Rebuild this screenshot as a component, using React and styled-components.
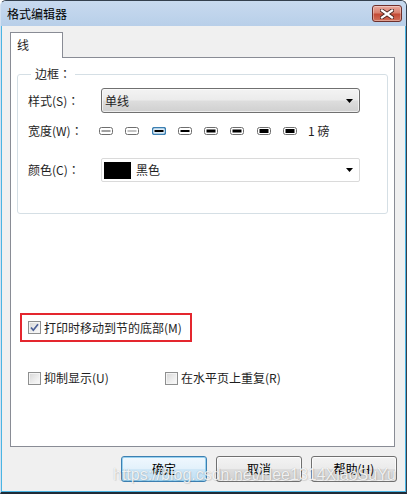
import React from "react"
import styled, { createGlobalStyle } from "styled-components"

const GlobalStyle = createGlobalStyle`
  html, body {
    margin: 0;
    padding: 0;
    background: #ffffff;
  }
  body {
    font-family: "Noto Sans CJK SC", "Noto Sans", sans-serif;
    font-size: 12px;
    color: #1e1e1e;
  }
  * {
    box-sizing: border-box;
  }
`

const Window = styled.div`
  position: relative;
  width: 407px;
  height: 494px;
  display: flex;
  flex-direction: column;
  background: #bcd2ea;
  border-top: 1px solid #34404e;
  border-right: 1px solid #34404e;
  border-bottom: 2px solid #1f2b37;
  border-left: 1px solid #d2e1f1;
  border-top-left-radius: 6px;
  border-top-right-radius: 6px;
  overflow: hidden;
`

const TitleBar = styled.div`
  height: 25px;
  flex-shrink: 0;
  display: flex;
  align-items: center;
  justify-content: space-between;
  padding: 0 4px 0 6px;
  background: linear-gradient(180deg, #c8daef 0%, #b8cfe9 100%);
`

const Title = styled.span`
  font-size: 12px;
  line-height: 16px;
  color: #000;
`

const CloseButton = styled.div`
  width: 30px;
  height: 17px;
  display: flex;
  align-items: center;
  justify-content: center;
  border: 1px solid #6e2f2b;
  border-radius: 3px;
  background: linear-gradient(180deg, #e8a99e 0%, #d9816f 45%, #c44a35 55%, #d1705a 100%);
  box-shadow: inset 0 0 0 1px rgba(255, 255, 255, 0.35);
`

const Body = styled.div`
  flex: 1;
  display: flex;
  flex-direction: column;
  padding: 6px 10px 9px 8px;
  background: #f0f0f0;
  border: 1px solid #4ab5e3;
  border-top: none;
`

const TabStrip = styled.div`
  display: flex;
  height: 25px;
  flex-shrink: 0;
`

const Tab = styled.div`
  position: relative;
  z-index: 1;
  width: 53px;
  height: 26px;
  padding: 4px 0 0 6px;
  line-height: 16px;
  background: #ffffff;
  border: 1px solid #898c95;
  border-bottom: none;
`

const Panel = styled.div`
  flex: 1;
  display: flex;
  flex-direction: column;
  align-items: flex-start;
  padding: 8px 6px 0 6px;
  background: #ffffff;
  border: 1px solid #898c95;
`

const GroupBox = styled.fieldset`
  align-self: stretch;
  margin: 0;
  padding: 0 0 31px 10px;
  border: 1px solid #d5dfe5;
  border-radius: 3px;
`

const Legend = styled.legend`
  margin-left: 3px;
  padding: 0 4px;
  line-height: 16px;
  font-size: 12px;
`

// fullwidth colon drawn centred, as the Windows UI font does
const Colon = styled.span`
  font-family: "Noto Sans CJK TC", "Noto Sans CJK SC", sans-serif;
`

const Row = styled.div`
  display: flex;
  align-items: center;
  height: ${({ h }) => h}px;
  margin-top: ${({ mt }) => mt}px;
`

const Label = styled.span`
  width: 73px;
  flex-shrink: 0;
  line-height: 16px;
`

const Select = styled.div`
  width: 259px;
  height: 25px;
  display: flex;
  align-items: center;
  justify-content: space-between;
  padding: 0 6px 0 3px;
  border: 1px solid #707070;
  border-radius: 3px;
  background: linear-gradient(180deg, #f3f3f3 0%, #ebebeb 48%, #dddddd 52%, #d0d0d0 100%);
  box-shadow: inset 0 0 0 1px rgba(255, 255, 255, 0.6);
  line-height: 16px;
`

const ColorCombo = styled.div`
  width: 259px;
  height: 24px;
  display: flex;
  align-items: center;
  padding: 0 6px 0 2px;
  border: 1px solid #dadada;
  border-radius: 2px;
  background: #ffffff;
  line-height: 16px;
`

const Swatch = styled.div`
  width: 27px;
  height: 17px;
  background: ${({ color }) => color};
`

const ComboText = styled.span`
  flex: 1;
  margin-left: 5px;
`

const WidthList = styled.div`
  display: flex;
  align-items: center;
  gap: 12.3px;
  margin-left: -2px;
`

const Points = styled.span`
  margin-left: 11px;
  line-height: 16px;
`

const HighlightBox = styled.div`
  display: flex;
  align-items: center;
  gap: 3px;
  height: 29px;
  margin: 99px 0 0 3px;
  padding: 0 8px 0 6px;
  border: 2px solid #e4262e;
`

const CheckRow = styled.div`
  display: flex;
  align-items: center;
  height: 16px;
  margin: 28px 0 0 11px;
`

const CheckItem = styled.label`
  display: flex;
  align-items: center;
  gap: 3px;
  width: ${({ w }) => (w ? `${w}px` : "auto")};
  line-height: 16px;
`

const Box = styled.span`
  width: 13px;
  height: 13px;
  flex-shrink: 0;
  display: flex;
  align-items: center;
  justify-content: center;
  border: 1px solid #8e8f8f;
  background: linear-gradient(135deg, #d6d6d6 0%, #eeeeee 60%, #fbfbfb 100%);
  box-shadow: inset 0 0 0 1px #f4f4f4;
`

const ButtonRow = styled.div`
  display: flex;
  justify-content: flex-end;
  gap: 9px;
  margin: 9px -2px 0 0;
  flex-shrink: 0;
`

const Button = styled.div`
  width: 86px;
  height: 26px;
  display: flex;
  align-items: center;
  justify-content: center;
  border: 1px solid ${({ primary }) => (primary ? "#3c7fb1" : "#707070")};
  border-radius: 3px;
  background: ${({ primary }) =>
    primary
      ? "linear-gradient(180deg, #f0f8fe 0%, #e3f1fb 48%, #cfe7f7 52%, #bfdff4 100%)"
      : "linear-gradient(180deg, #f3f3f3 0%, #ebebeb 48%, #dddddd 52%, #d0d0d0 100%)"};
  box-shadow: inset 0 0 0 1px ${({ primary }) => (primary ? "#98d1ef" : "rgba(255,255,255,0.7)")};
  line-height: 16px;
  color: #000;
`

const Watermark = styled.div`
  position: absolute;
  left: 112px;
  top: 466px;
  font-family: "Liberation Sans", Arial, sans-serif;
  font-size: 16px;
  line-height: 16px;
  white-space: nowrap;
  color: rgba(255, 255, 255, 0.85);
  text-shadow: 0 0 1px rgba(0, 0, 0, 0.25), 1px 1px 1px rgba(0, 0, 0, 0.1);
  pointer-events: none;
`

const CloseIcon = () => (
  <svg width="14" height="10" viewBox="0 0 14 10">
    <path d="M2 1.5 L12 8.5 M12 1.5 L2 8.5" stroke="#4a2520" strokeWidth="4" strokeLinecap="square" />
    <path d="M2 1.5 L12 8.5 M12 1.5 L2 8.5" stroke="#ffffff" strokeWidth="2.2" strokeLinecap="square" />
  </svg>
)

const Arrow = () => (
  <svg width="7" height="4" viewBox="0 0 7 4">
    <polygon points="0,0 7,0 3.5,4" fill="#000" />
  </svg>
)

const Check = () => (
  <svg width="9" height="9" viewBox="0 0 9 9">
    <path d="M1 4.5 L3.3 7.2 L8 1.2" fill="none" stroke="#4a5f97" strokeWidth="1.7" />
  </svg>
)

// line widths shown as little bar swatches, third one selected
const widths = [
  { t: 1, c: "#444" },
  { t: 1, c: "#888" },
  { t: 2, c: "#000" },
  { t: 2, c: "#000" },
  { t: 3, c: "#000" },
  { t: 3, c: "#000" },
  { t: 4, c: "#000" },
  { t: 4, c: "#000" },
]

const WidthSwatch = ({ t, c, selected }) => (
  <svg width="14" height="8" viewBox="0 0 14 8">
    <rect
      x="0.5"
      y="0.5"
      width="13"
      height="7"
      rx="2"
      fill={selected ? "#dcecf8" : "#fff"}
      stroke={selected ? "#3c7fb1" : "#6e6e6e"}
      strokeWidth={selected ? 1.4 : 1}
    />
    <rect x="2.5" y={4 - t / 2} width="9" height={t} fill={c} />
  </svg>
)

const App = () => (
  <>
    <GlobalStyle />
    <Window>
      <TitleBar>
        <Title>格式编辑器</Title>
        <CloseButton>
          <CloseIcon />
        </CloseButton>
      </TitleBar>
      <Body>
        <TabStrip>
          <Tab>线</Tab>
        </TabStrip>
        <Panel>
          <GroupBox>
            <Legend>
              边框<Colon>：</Colon>
            </Legend>
            <Row h={25} mt={6}>
              <Label>
                样式(S)<Colon>：</Colon>
              </Label>
              <Select>
                <span>单线</span>
                <Arrow />
              </Select>
            </Row>
            <Row h={12} mt={12}>
              <Label>
                宽度(W)<Colon>：</Colon>
              </Label>
              <WidthList>
                {widths.map((w, i) => (
                  <WidthSwatch key={i} t={w.t} c={w.c} selected={i === 2} />
                ))}
              </WidthList>
              <Points>1 磅</Points>
            </Row>
            <Row h={24} mt={21}>
              <Label>
                颜色(C)<Colon>：</Colon>
              </Label>
              <ColorCombo>
                <Swatch color="#000" />
                <ComboText>黑色</ComboText>
                <Arrow />
              </ColorCombo>
            </Row>
          </GroupBox>
          <HighlightBox>
            <Box>
              <Check />
            </Box>
            <span>打印时移动到节的底部(M)</span>
          </HighlightBox>
          <CheckRow>
            <CheckItem w={137}>
              <Box />
              <span>抑制显示(U)</span>
            </CheckItem>
            <CheckItem>
              <Box />
              <span>在水平页上重复(R)</span>
            </CheckItem>
          </CheckRow>
        </Panel>
        <ButtonRow>
          <Button primary>确定</Button>
          <Button>取消</Button>
          <Button>帮助(H)</Button>
        </ButtonRow>
      </Body>
      <Watermark>https://blog.csdn.net/Hee1314XiaoSuYu</Watermark>
    </Window>
  </>
)

export default App
